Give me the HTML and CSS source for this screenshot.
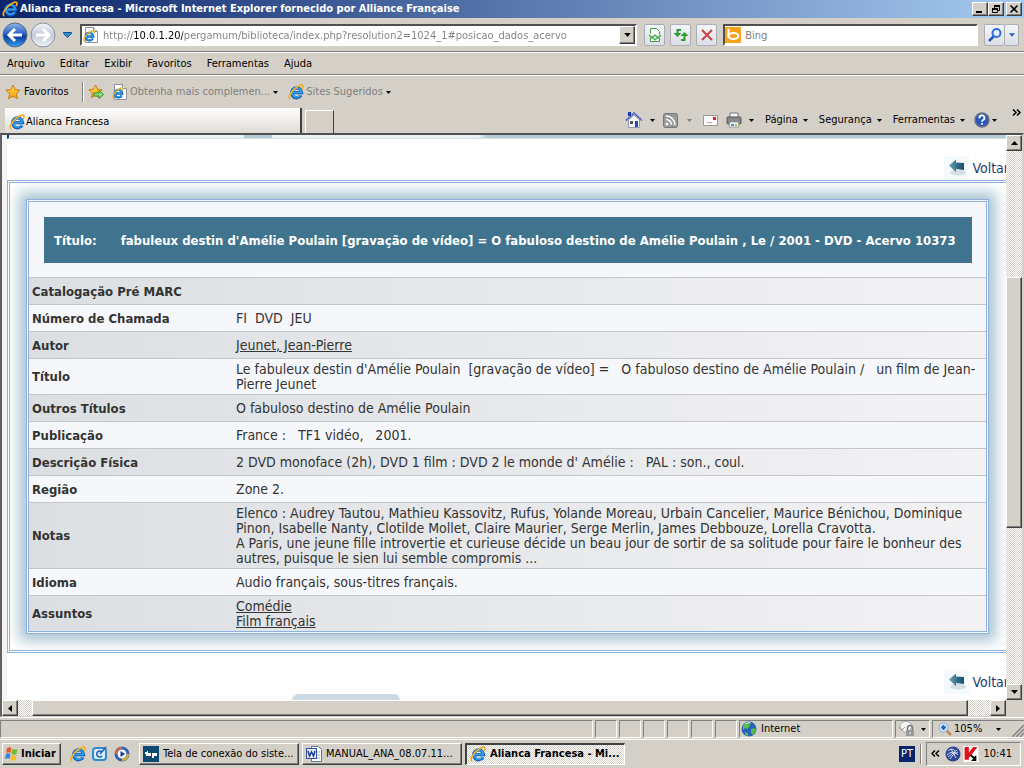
FILE: index.html
```html
<!DOCTYPE html>
<html lang="pt">
<head>
<meta charset="utf-8">
<title>Alianca Francesa</title>
<link rel="stylesheet" href="styles.css">
</head>
<body>
<svg class="defs" aria-hidden="true">
  <defs>
    <linearGradient id="orb" x1="0" y1="0" x2="0" y2="1"><stop offset="0" stop-color="#8db4e8"/><stop offset=".45" stop-color="#2a62c4"/><stop offset=".55" stop-color="#0a3c9c"/><stop offset="1" stop-color="#38a0f0"/></linearGradient>
    <linearGradient id="orbOff" x1="0" y1="0" x2="0" y2="1"><stop offset="0" stop-color="#f4f6fa"/><stop offset=".5" stop-color="#c2cad8"/><stop offset="1" stop-color="#f0f4fa"/></linearGradient>
    <linearGradient id="gold" x1="0" y1="0" x2="0" y2="1"><stop offset="0" stop-color="#ffe34d"/><stop offset="1" stop-color="#f79a12"/></linearGradient>
    <linearGradient id="teal" x1="0" y1="0" x2="1" y2="0"><stop offset="0" stop-color="#6fa3b6"/><stop offset=".6" stop-color="#2c6a84"/><stop offset="1" stop-color="#1f5068"/></linearGradient>
    <symbol id="ie" viewBox="0 0 16 16">
      <path d="M13 11.2A5 5 0 1 1 13.6 8.6H5" fill="none" stroke="#1560bd" stroke-width="3.200"/>
      <path d="M12.600 10.800A4.600 4.600 0 1 1 13.200 8.400H5" fill="none" stroke="#35a5ee" stroke-width="1.500"/>
      <path d="M2.500 15C-.5 14.500 2 8.500 6.500 4.800S14.800-.2 15 2.500c0 .8-.4 1.700-.9 2.500" fill="none" stroke="#f2b01e" stroke-width="1.700"/>
    </symbol>
    <symbol id="iepage" viewBox="0 0 16 16">
      <path d="M2.500.5h8l4 4v11h-12z" fill="#fff" stroke="#8d939c"/><path d="M10.500.5v4h4" fill="#e4e8ee" stroke="#8d939c"/>
      <use href="#ie" x="0" y="3" width="12" height="12"/>
    </symbol>
    <symbol id="star" viewBox="0 0 16 16"><path d="M8 1l2.100 4.600 5 .6-3.700 3.400 1 5L8 12.100l-4.400 2.500 1-5L.9 6.200l5-.6z" fill="url(#gold)" stroke="#c77c0c"/></symbol>
    <symbol id="down" viewBox="0 0 5 3"><path d="M0 0h5L2.500 3z" fill="currentColor"/></symbol>
    <symbol id="back" viewBox="0 0 25 24">
      <rect width="25" height="24" fill="#f4f9fb"/><ellipse cx="14" cy="16.500" rx="8" ry="3" fill="#d3e0e5"/>
      <path d="M5 9.500l7-6v3l8 .5v7l-8-1v3z" fill="url(#teal)"/>
    </symbol>
  </defs>
</svg>

<div class="window">
  <header class="titlebar">
    <svg class="i16"><use href="#ie"/></svg>
    <h1 class="title">Alianca Francesa - Microsoft Internet Explorer fornecido por Alliance Française</h1>
    <div class="winbtns">
      <button class="raised winbtn" aria-label="Minimizar"><svg viewBox="0 0 12 10"><path d="M2 7h6v2H2z"/></svg></button>
      <button class="raised winbtn" aria-label="Restaurar"><svg viewBox="0 0 12 10"><path d="M4 1h6v2H4zM2 4h6v2H2z"/><path d="M4.500 1v3M9.500 1v5.500H8M2.500 4v4.500h5V4" fill="none" stroke="#000"/></svg></button>
      <button class="raised winbtn close" aria-label="Fechar"><svg viewBox="0 0 12 10"><path d="M2.500 1.500l7 7m0-7l-7 7" stroke="#000" stroke-width="1.600"/></svg></button>
    </div>
  </header>

  <div class="navrow">
    <div class="orbs">
      <button class="plain" aria-label="Voltar"><svg class="orb" viewBox="0 0 26 26"><circle cx="13" cy="13" r="12" fill="url(#orb)" stroke="#5d6b85"/><path d="M20 13H8m5-6l-6 6 6 6" fill="none" stroke="#fff" stroke-width="3"/></svg></button>
      <button class="plain" aria-label="Avançar"><svg class="orb" viewBox="0 0 26 26"><circle cx="13" cy="13" r="12" fill="url(#orbOff)" stroke="#8a92a2"/><path d="M6 13h12m-5-6l6 6-6 6" fill="none" stroke="#fff" stroke-width="3"/></svg></button>
      <button class="plain history" aria-label="Páginas recentes"><svg viewBox="0 0 9 6"><path d="M.5.5h8v1l-4 4-4-4z" fill="#2f8fd8" stroke="#12508e"/></svg></button>
    </div>
    <div class="sunken address">
      <svg class="i16"><use href="#iepage"/></svg>
      <input class="url" aria-label="Endereço" value="http://10.0.1.20/pergamum/biblioteca/index.php?resolution2=1024_1#posicao_dados_acervo">
      <button class="raised drop" aria-label="Abrir lista"><svg class="arr big"><use href="#down"/></svg></button>
    </div>
    <div class="navbtns">
      <button class="soft" aria-label="Modo de compatibilidade"><svg class="i16" viewBox="0 0 16 16"><path d="M3.500 6.500v-5h6l3 3v3M3.500 11v3.500h9V12" fill="#fff" stroke="#3f9c45"/><path d="M2 8l3 3 3-3 3 3 3-3M3 12l2-2 3 3 3-3 2 2" fill="none" stroke="#3fae45" stroke-width="1.200"/></svg></button>
      <button class="soft" aria-label="Atualizar"><svg class="i16" viewBox="0 0 16 16"><path d="M8 3H4.500v4M8 13h3.500V9" fill="none" stroke="#2f9a34" stroke-width="2"/><path d="M.5 6h8l-4 4zM7.500 9h8l-4-4z" fill="#2f9a34"/></svg></button>
      <button class="soft" aria-label="Parar"><svg class="i16" viewBox="0 0 16 16"><path d="M3 3l10 10M13 3L3 13" stroke="#c8414b" stroke-width="2"/></svg></button>
    </div>
    <div class="sunken search">
      <svg class="i16" viewBox="0 0 16 16"><rect width="16" height="16" fill="#f9a11b"/><path d="M3.500 2v8.500" stroke="#fff" stroke-width="2.200"/><ellipse cx="8.500" cy="9" rx="4.800" ry="3" fill="none" stroke="#fff" stroke-width="2.200"/></svg>
      <input class="query" aria-label="Pesquisar" placeholder="Bing">
    </div>
    <div class="go">
      <button class="soft" aria-label="Pesquisar"><svg class="i16" viewBox="0 0 16 16"><path d="M7 9l-5 5" stroke="#2a56b8" stroke-width="2.500"/><circle cx="9.500" cy="6" r="4" fill="#e8f2fd" stroke="#2f6fdc" stroke-width="2"/></svg></button>
      <button class="soft thin" aria-label="Opções de pesquisa"><svg class="arr blue"><use href="#down"/></svg></button>
    </div>
  </div>

  <nav class="menu">
    <button class="plain">Arquivo</button><button class="plain">Editar</button><button class="plain">Exibir</button><button class="plain">Favoritos</button><button class="plain">Ferramentas</button><button class="plain">Ajuda</button>
  </nav>

  <div class="favs">
    <button class="plain favbtn"><svg class="i16"><use href="#star"/></svg>Favoritos</button>
    <span class="sep"></span>
    <button class="plain addfav" aria-label="Adicionar aos Favoritos"><svg class="i16" viewBox="0 0 16 16"><use href="#star" width="15" height="15"/><path d="M6 9h5V6.500l4.500 4-4.500 4V12H6z" fill="#8be07a" stroke="#2b8f2a"/></svg></button>
    <a class="favlink more" href="#"><svg class="i16"><use href="#iepage"/></svg>Obtenha mais complemen...<svg class="arr"><use href="#down"/></svg></a>
    <a class="favlink" href="#"><svg class="i16"><use href="#ie"/></svg>Sites Sugeridos<svg class="arr"><use href="#down"/></svg></a>
  </div>

  <div class="tabrow">
    <button class="tab"><svg class="i16"><use href="#ie"/></svg>Alianca Francesa</button>
    <button class="newtab" aria-label="Nova guia"></button>
    <div class="commands">
      <button class="plain cmd" aria-label="Página inicial"><svg class="i18" viewBox="0 0 18 18"><path d="M3.500 9v7.500h11V9L9 4z" fill="#f5f8fd" stroke="#8b97b4"/><path d="M1 9.500L9 2l8 7.500" fill="none" stroke="#3346b8" stroke-width="1.600" stroke-dasharray="2 .6"/><path d="M3 1h3v4H3z" fill="#2237b5"/><path d="M10 10h3v6h-3z" fill="#1f4fa5"/><path d="M5 10h3v3H5z" fill="#555"/></svg><svg class="arr"><use href="#down"/></svg></button>
      <button class="plain cmd feed" aria-label="Feeds"><svg class="i15" viewBox="0 0 15 15"><rect x=".5" y=".5" width="14" height="14" rx="2" fill="#999" stroke="#777"/><circle cx="4" cy="11" r="1.500" fill="#fff"/><path d="M3 6.500a5.500 5.500 0 0 1 5.500 5.500M3 3a9 9 0 0 1 9 9" fill="none" stroke="#fff" stroke-width="1.500"/></svg><svg class="arr off"><use href="#down"/></svg></button>
      <button class="plain cmd" aria-label="Ler email"><svg class="i15" viewBox="0 0 15 15"><path d="M.5 2.500h14v10H.5z" fill="#fafafa" stroke="#999"/><path d="M10 4h3v3h-3z" fill="#d7262b"/><path d="M4 9.500h5" stroke="#aaa"/></svg></button>
      <button class="plain cmd print" aria-label="Imprimir"><svg class="i16" viewBox="0 0 16 16"><path d="M4 1h8v5H4z" fill="#f6f6f6" stroke="#777"/><rect x="1" y="5" width="14" height="7" rx="1" fill="#8a8a8a" stroke="#555"/><path d="M4 10h8l1 5H3z" fill="#fff" stroke="#999"/><path d="M5 12h3v2H5z" fill="#2a9ec9"/><path d="M9 12h2v2H9z" fill="#8cc63f"/></svg><svg class="arr"><use href="#down"/></svg></button>
      <button class="plain cmd">Página<svg class="arr"><use href="#down"/></svg></button>
      <button class="plain cmd">Segurança<svg class="arr"><use href="#down"/></svg></button>
      <button class="plain cmd">Ferramentas<svg class="arr"><use href="#down"/></svg></button>
      <button class="plain cmd help" aria-label="Ajuda"><svg class="i16" viewBox="0 0 16 16"><circle cx="8" cy="8" r="7" fill="#2a57bf" stroke="#6d7480" stroke-width="1.500"/><path d="M5.500 6.300A2.500 2.500 0 1 1 8.800 8.200Q8 8.600 8 9.800M8 11v1.800" fill="none" stroke="#fff" stroke-width="1.800"/></svg><svg class="arr"><use href="#down"/></svg></button>
      <button class="plain chevron" aria-label="Mais"><svg viewBox="0 0 9 7"><path d="M1 .5l3 3-3 3M5 .5l3 3-3 3" fill="none" stroke="#000" stroke-width="1.500"/></svg></button>
    </div>
  </div>

  <div class="frame">
    <main class="view">
      <div class="page">
        <div class="banner"><i></i></div>
        <div class="backrow"><a class="voltar" href="#"><svg class="backicon"><use href="#back"/></svg>Voltar</a></div>
        <section class="outer">
          <div class="inner">
            <h2 class="record"><span>Título:</span><span class="name">fabuleux destin d'Amélie Poulain [gravação de vídeo] = O fabuloso destino de Amélie Poulain , Le / 2001 - DVD - Acervo 10373</span></h2>
            <table class="data">
              <tr><th colspan="2">Catalogação Pré MARC</th></tr>
              <tr><th>Número de Chamada</th><td>FI&nbsp; DVD&nbsp; JEU</td></tr>
              <tr><th>Autor</th><td><a href="#">Jeunet, Jean-Pierre</a></td></tr>
              <tr><th>Título</th><td>Le fabuleux destin d'Amélie Poulain&nbsp; [gravação de vídeo] =&nbsp;&nbsp; O fabuloso destino de Amélie Poulain /&nbsp;&nbsp; un film de Jean-<br>Pierre Jeunet</td></tr>
              <tr><th>Outros Títulos</th><td>O fabuloso destino de Amélie Poulain</td></tr>
              <tr><th>Publicação</th><td>France :&nbsp;&nbsp; TF1 vidéo,&nbsp;&nbsp; 2001.</td></tr>
              <tr><th>Descrição Física</th><td>2 DVD monoface (2h), DVD 1 film : DVD 2 le monde d' Amélie :&nbsp;&nbsp; PAL : son., coul.</td></tr>
              <tr><th>Região</th><td>Zone 2.</td></tr>
              <tr><th>Notas</th><td>Elenco : Audrey Tautou, Mathieu Kassovitz, Rufus, Yolande Moreau, Urbain Cancelier, Maurice Bénichou, Dominique<br>Pinon, Isabelle Nanty, Clotilde Mollet, Claire Maurier, Serge Merlin, James Debbouze, Lorella Cravotta.<br>A Paris, une jeune fille introvertie et curieuse décide un beau jour de sortir de sa solitude pour faire le bonheur des<br>autres, puisque le sien lui semble compromis ...</td></tr>
              <tr><th>Idioma</th><td>Audio français, sous-titres français.</td></tr>
              <tr><th>Assuntos</th><td><a href="#">Comédie</a><br><a href="#">Film français</a></td></tr>
            </table>
          </div>
        </section>
        <div class="backrow"><a class="voltar" href="#"><svg class="backicon"><use href="#back"/></svg>Voltar</a></div>
        <div class="nexttab"></div>
      </div>
    </main>
    <div class="vbar">
      <button class="raised sb" aria-label="Para cima"><svg viewBox="0 0 7 4"><path d="M0 4h7L3.500 0z"/></svg></button>
      <div class="vtrack"><div class="raised vthumb"></div></div>
      <button class="raised sb" aria-label="Para baixo"><svg viewBox="0 0 7 4"><path d="M0 0h7L3.500 4z"/></svg></button>
    </div>
    <div class="hbar">
      <button class="raised sb" aria-label="Para a esquerda"><svg class="side" viewBox="0 0 4 7"><path d="M4 0v7L0 3.500z"/></svg></button>
      <div class="htrack"><div class="raised hthumb"></div></div>
      <button class="raised sb" aria-label="Para a direita"><svg class="side" viewBox="0 0 4 7"><path d="M0 0v7l4-3.500z"/></svg></button>
    </div>
    <div class="corner"></div>
  </div>

  <footer class="status">
    <div class="panel wide"></div>
    <div class="panel"></div><div class="panel"></div><div class="panel"></div><div class="panel"></div><div class="panel"></div><div class="panel"></div>
    <div class="panel zone"><svg class="i16" viewBox="0 0 16 16"><circle cx="8" cy="8" r="7.500" fill="#2563b8"/><path d="M2 4q4-4 6-2l1 3-3 3-2-1-2 2zM10 8l4-1 1 3-3 4-2-2zM4 11l3 1v3l-3-1z" fill="#55bd4a"/><path d="M4 3q3-2 6-1" stroke="#d8f0ff" fill="none"/></svg>Internet</div>
    <div class="panel lock"><svg class="i16" viewBox="0 0 16 16"><path d="M1 8a6 6 0 0 1 12-3l-4 8z" fill="#f5f5f5" stroke="#aaa"/><path d="M0 5l3 4 3-3" fill="none" stroke="#999"/><path d="M7 9h8v6H7z" fill="#999"/><path d="M8.500 9V7a2.500 2.500 0 0 1 5 0v2" fill="none" stroke="#777" stroke-width="1.500"/><path d="M11 11v2" stroke="#fff"/></svg><svg class="arr"><use href="#down"/></svg></div>
    <div class="panel zoom"><svg class="i14" viewBox="0 0 14 14"><path d="M8 8l5 5" stroke="#c08a52" stroke-width="2.500"/><circle cx="5.500" cy="5.500" r="4.500" fill="#d6eafa" stroke="#88a9cc"/><path d="M5.500 3v5M3 5.500h5" stroke="#1565c8" stroke-width="2"/></svg><span>105%</span><svg class="arr"><use href="#down"/></svg><svg class="grip" viewBox="0 0 12 12"><path d="M0 12L12 0M4 12l8-8M8 12l4-4" stroke="#808080" stroke-width="1.500"/></svg></div>
  </footer>

  <div class="taskbar">
    <button class="raised start"><svg class="i16" viewBox="0 0 16 16"><path d="M3 2q2.500-1.500 4.500 0L6.500 7Q4.500 5.500 2 7z" fill="#e8592b"/><path d="M8.500 3q2.500 1.500 5 0l-1 5q-2.500 1.500-5 0z" fill="#74b62e"/><path d="M2 8q2.500-1.500 4.500 0l-1 5Q3.500 11.500 1 13z" fill="#3f7fe0"/><path d="M7.500 9q2.500 1.500 5 0l-1 5q-2.500 1.500-5 0z" fill="#f5bd1f"/></svg>Iniciar</button>
    <div class="quick">
      <button class="plain" aria-label="Internet Explorer"><svg class="i16"><use href="#ie"/></svg></button>
      <button class="plain" aria-label="Mostrar área de trabalho"><svg class="i16" viewBox="0 0 16 16"><rect x="1" y="2" width="13" height="12" rx="3" fill="#d8ecfb" stroke="#2f8bd0" stroke-width="2"/><path d="M10 6a3 3 0 1 0 0 4M8 8l6-7" fill="none" stroke="#1b5fae" stroke-width="1.500"/></svg></button>
      <button class="plain" aria-label="Windows Media Player"><svg class="i16" viewBox="0 0 16 16"><circle cx="8" cy="8" r="6" fill="#f4f8ff" stroke="#3163ad" stroke-width="3"/><path d="M2 8a6 6 0 0 1 6-6" fill="none" stroke="#e06a2b" stroke-width="2"/><path d="M14 8a6 6 0 0 1-6 6" fill="none" stroke="#e2b52b" stroke-width="2"/><path d="M6.500 5l4.500 3-4.500 3z" fill="#163f8c"/></svg></button>
    </div>
    <button class="raised task"><svg class="i16" viewBox="0 0 16 16"><rect width="16" height="16" fill="#0c4a72"/><path d="M2 6h2V5h1v2h3v3H3V8H2zM9 7h5v3h-3v2H9z" fill="#fff"/></svg><span>Tela de conexão do siste...</span></button>
    <button class="raised task"><svg class="i16" viewBox="0 0 16 16"><path d="M5.500.5h7l3 3v12h-10z" fill="#fff" stroke="#5c74a8"/><path d="M11 6h3m-3 3h3m-3 3h3" stroke="#9fb0d0"/><rect x=".5" y="2.500" width="10" height="10" fill="#e3ebfa" stroke="#2f55a5"/><path d="M2 5l1.500 5L5.500 6l2 4L9 5" fill="none" stroke="#1e3f96" stroke-width="1.500"/></svg><span>MANUAL_ANA_08.07.11...</span></button>
    <button class="task active"><svg class="i16"><use href="#ie"/></svg><span>Alianca Francesa - Mi...</span></button>
    <div class="lang">PT</div>
    <span class="sep"></span>
    <div class="tray">
      <svg class="chev" viewBox="0 0 9 7"><path d="M4 .5l-3 3 3 3M8 .5l-3 3 3 3" fill="none" stroke="#000" stroke-width="1.500"/></svg>
      <svg class="i16" viewBox="0 0 16 16"><circle cx="8" cy="8" r="7.500" fill="#2b4593"/><path d="M3 5q4-4 7 0M2 9q6-6 11 0M5 13q2-5 8-7M6 3l5 9M3 11l9-7" fill="none" stroke="#d5dff5"/></svg>
      <svg class="i16" viewBox="0 0 14 15"><path d="M0 0h14v15H0z" fill="#fff"/><path d="M1 1h4v5l4-5h4L7 9l-2 2v2H1z" fill="#e0101b"/><path d="M7 8l3 2 2-1v5H7l2-2-3-3z" fill="#000"/></svg>
      <time>10:41</time>
    </div>
  </div>
</div>
</body>
</html>
```
FILE: styles.css
```css
* { box-sizing: border-box; }
body {
  margin: 0;
  background: #d4d0c8;
  color: #000;
  font: 11px/14px "DejaVu Sans Condensed", "DejaVu Sans", sans-serif;
}
button, input { font: inherit; color: inherit; }
svg { display: block; flex: none; }
.defs { position: absolute; width: 0; height: 0; }
.i14 { width: 14px; height: 14px; }
.i15 { width: 15px; height: 15px; }
.i16 { width: 16px; height: 16px; }
.i18 { width: 18px; height: 18px; }
.arr { width: 5px; height: 3px; }
.arr.big { width: 7px; height: 4px; }
.arr.off { color: #808080; }
.arr.blue { width: 6px; height: 4px; color: #1f5fc0; }

.window { display: flex; flex-direction: column; height: 100vh; overflow: hidden; }
.plain { display: flex; align-items: center; padding: 0; border: 0; background: none; white-space: nowrap; }
.raised {
  padding: 0;
  background: #d4d0c8;
  border: 1px solid;
  border-color: #fff #404040 #404040 #fff;
  box-shadow: inset -1px -1px #808080;
}
.sunken {
  display: flex;
  align-items: center;
  height: 22px;
  background: #fff;
  border: 2px solid;
  border-color: #505050 #fff #fff #505050;
}

.titlebar { display: flex; align-items: center; height: 18px; padding: 0 2px; gap: 2px; background: linear-gradient(90deg, #0a246a, #a6caf0); flex: none; }
.title { flex: 1; margin: 0; font-size: 11px; color: #fff; white-space: nowrap; }
.winbtns { display: flex; }
.winbtn { width: 16px; height: 14px; }
.winbtn svg { width: 12px; height: 10px; margin: 0 1px; }
.winbtn.close { margin-left: 2px; }

.navrow { display: flex; align-items: center; height: 34px; padding: 0 5px 0 2px; border-bottom: 1px solid #808080; box-shadow: 0 1px #fff; flex: none; }
.orbs { display: flex; align-items: center; gap: 2px; width: 78px; }
.orb { width: 26px; height: 26px; }
.history { margin-left: 5px; }
.history svg { width: 9px; height: 6px; }
.address { flex: 559; padding-left: 1px; }
.url, .query { flex: 1; min-width: 0; height: 18px; padding: 1px 0 0; border: 0; outline: 0; margin-left: 4px; }
.url { color: transparent; background: linear-gradient(90deg, #808080 31px, #000 31px 80px, #808080 80px); background-clip: text; -webkit-background-clip: text; }
.query::placeholder { color: #808080; opacity: 1; }
.drop { display: grid; place-items: center; width: 16px; height: 18px; }
.navbtns { display: flex; gap: 5px; margin: 0 6px 0 7px; }
.soft { display: grid; place-items: center; width: 21px; height: 22px; padding: 0; border: 1px solid #a9adb8; border-radius: 2px; background: linear-gradient(#f4f5f8, #dcdfe6); }
.search { flex: 254; }
.go { display: flex; margin-left: 6px; }
.soft.thin { width: 14px; border-left: 0; }

.menu { display: flex; align-items: center; gap: 15px; height: 23px; padding: 2px 0 0 7px; border-bottom: 1px solid #808080; box-shadow: 0 1px #fff; flex: none; }

.favs { display: flex; align-items: center; height: 32px; padding: 2px 0 0 5px; flex: none; }
.favbtn { gap: 3px; width: 77px; }
.sep { width: 2px; height: 20px; border-left: 1px solid #808080; border-right: 1px solid #fff; flex: none; }
.addfav { margin: 0 8px 0 4px; }
.favlink { display: flex; align-items: center; gap: 2px; color: #808080; text-decoration: none; }
.favlink.more { margin-right: 10px; }
.favlink .arr { color: #000; margin-left: 1px; }

.tabrow { display: flex; align-items: flex-end; height: 26px; padding-left: 5px; flex: none; }
.tab { display: flex; align-items: center; gap: 1px; width: 297px; height: 25px; padding: 2px 4px 0; border: 0; border-right: 2px solid #404040; background: linear-gradient(#fff, #dedbd5); }
.newtab { width: 29px; height: 23px; margin-left: 3px; border: 1px solid #fff; border-right: 1px solid #404040; border-bottom: 0; background: #d4d0c8; }
.commands { display: flex; flex: 1; align-items: center; justify-content: flex-end; gap: 11px; height: 26px; padding-right: 3px; }
.cmd { gap: 5px; }
.cmd:first-child, .print { gap: 7px; }
.feed { gap: 9px; margin-left: -3px; }
.print { margin-left: -3px; }
.help { gap: 2px; margin-left: -2px; }
.chevron { align-self: flex-start; margin: 2px 0 0 4px; }
.chevron svg { width: 9px; height: 7px; }

.frame {
  display: grid;
  flex: 1;
  min-height: 0;
  grid-template: minmax(0, 1fr) 16px / minmax(0, 1fr) 16px;
  border: 2px solid;
  border-color: #505050 #d4d0c8 #d4d0c8 #606060;
  border-bottom-width: 1px;
}
.view { overflow: hidden; background: #f4f4f4; font: 14px/15px "DejaVu Sans Condensed", Verdana, sans-serif; color: #333; }
.page { display: flex; flex-direction: column; height: 100%; margin-left: 5px; background: #fff; }
.banner { display: flex; height: 4px; background: linear-gradient(90deg, #eef2f4 47%, #b4cbd6 48%); border-left: 2px solid #0c4a72; border-bottom: 1px solid #d5dfe4; flex: none; }
.banner i { width: 28px; margin-left: 235px; background: #b4cbd6; }
.backrow { display: flex; justify-content: flex-end; margin: 17px -3px 0 0; }
.voltar { display: flex; align-items: center; gap: 3px; color: #1c3a70; text-decoration: none; }
.backicon { width: 25px; height: 24px; }
.outer { margin-right: -5px; padding: 16px 19px 16px 16px; border: 3px double #8fb2dc; overflow: hidden; flex: none; }
.inner { padding-top: 15px; border: 3px double #8fb2dc; background: #f6f7fb; box-shadow: 0 0 13px 7px #a9c4d2; }
.record { display: flex; align-items: center; gap: 24px; height: 46px; margin: 0 14px 0 15px; padding: 0 0 0 10px; background: #40748e; color: #fff; font-size: 13px; white-space: nowrap; }
.data { width: 100%; margin-top: 14px; border-spacing: 0; }
.data tr { height: 27px; }
.data tr:nth-child(odd) { background: linear-gradient(90deg, #dcdfe2, #f2f2f4); }
.data th, .data td { padding: 3px; border-top: 1px solid #c3c5ca; text-align: left; white-space: nowrap; }
.data td { padding-bottom: 2px; }
.data th { width: 204px; font-size: 13px; }
.data a { color: #333; }
.nexttab { width: 108px; height: 6px; margin: auto 0 0 285px; border-radius: 9px 9px 0 0; background: #cddae3; flex: none; }

.vbar { display: flex; flex-direction: column; }
.hbar { display: flex; }
.sb { display: grid; place-items: center; width: 16px; height: 16px; flex: none; }
.sb svg { width: 7px; height: 4px; }
.sb .side { width: 4px; height: 7px; }
.vtrack, .htrack { flex: 1; background: repeating-conic-gradient(#fff 0 25%, #d4d0c8 0 50%) 0 0 / 2px 2px; }
.vtrack { display: grid; grid-template-rows: 126fr 251fr 156fr; }
.vthumb { grid-row: 2; }
.htrack { display: grid; grid-template-columns: 14fr 936fr 22fr; }
.hthumb { grid-column: 2; }

.status { display: flex; gap: 2px; height: 22px; padding: 2px 0 1px; border-top: 1px solid #fff; flex: none; }
.panel { display: flex; align-items: center; gap: 4px; width: 22px; border: 1px solid; border-color: #808080 #fff #fff #808080; }
.panel.wide { flex: 1; }
.panel.zone { width: 154px; padding-left: 1px; }
.panel.lock { width: 35px; padding-left: 3px; gap: 6px; }
.panel.zoom { width: 92px; padding-left: 5px; gap: 2px; border-right: 0; }
.zoom .arr { margin-left: 12px; }
.zoom .grip { width: 12px; height: 12px; margin-left: auto; align-self: flex-end; }

.taskbar { display: flex; align-items: center; height: 29px; padding: 0 3px 1px 2px; border-top: 1px solid #fff; flex: none; }
.start { display: flex; align-items: center; gap: 1px; width: 59px; height: 22px; padding-left: 1px; font-weight: bold; }
.quick { display: flex; gap: 6px; width: 78px; padding-left: 9px; }
.task { display: flex; align-items: center; gap: 4px; width: 160px; height: 22px; margin-right: 3px; padding: 0 3px; white-space: nowrap; }
.task span { overflow: hidden; }
.task.active { border: 2px solid; border-width: 2px 1px 1px 2px; border-color: #404040 #fff #fff #404040; font-weight: bold; background: repeating-conic-gradient(#fff 0 25%, #d4d0c8 0 50%) 0 0 / 2px 2px; }
.lang { margin: 0 5px 0 auto; width: 16px; height: 16px; background: #0a246a; color: #fff; text-align: center; line-height: 16px; }
.tray { display: flex; align-items: center; gap: 2px; width: 95px; height: 24px; margin-left: 4px; padding: 0 8px 0 4px; border: 1px solid; border-color: #808080 #fff #fff #808080; }
.tray .chev { width: 9px; height: 7px; margin-right: 3px; }
.tray time { margin-left: auto; }
```
